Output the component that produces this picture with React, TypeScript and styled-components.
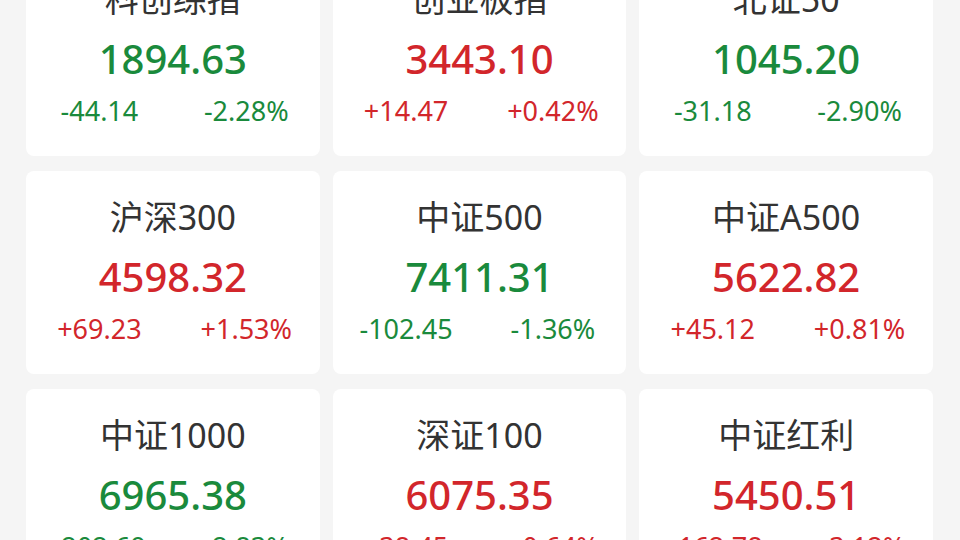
import styled, { createGlobalStyle } from 'styled-components';

type Trend = 'up' | 'down';

interface IndexItem {
  name: string;
  price: string;
  change: string;
  percent: string;
  trend: Trend;
}

const indices: IndexItem[] = [
  { name: '科创综指', price: '1894.63', change: '-44.14', percent: '-2.28%', trend: 'down' },
  { name: '创业板指', price: '3443.10', change: '+14.47', percent: '+0.42%', trend: 'up' },
  { name: '北证50', price: '1045.20', change: '-31.18', percent: '-2.90%', trend: 'down' },
  { name: '沪深300', price: '4598.32', change: '+69.23', percent: '+1.53%', trend: 'up' },
  { name: '中证500', price: '7411.31', change: '-102.45', percent: '-1.36%', trend: 'down' },
  { name: '中证A500', price: '5622.82', change: '+45.12', percent: '+0.81%', trend: 'up' },
  { name: '中证1000', price: '6965.38', change: '-202.69', percent: '-2.83%', trend: 'down' },
  { name: '深证100', price: '6075.35', change: '+38.45', percent: '+0.64%', trend: 'up' },
  { name: '中证红利', price: '5450.51', change: '+162.78', percent: '+3.12%', trend: 'up' },
];

const palette = {
  bg: '#f5f5f5',
  card: '#ffffff',
  title: '#333333',
  up: '#d2262b',
  down: '#1a8a3c',
};

const GlobalStyle = createGlobalStyle`
  html, body {
    margin: 0;
    padding: 0;
    background: ${palette.bg};
    overflow: hidden;
  }
  body {
    font-family: "Noto Sans", "Noto Sans CJK SC", sans-serif;
  }
`;

const Page = styled.div`
  width: 960px;
  height: 540px;
  overflow: hidden;
  background: ${palette.bg};
`;

// the list is scrolled, so the first row starts above the top edge
const Grid = styled.div`
  display: grid;
  grid-template-columns: repeat(3, 1fr);
  gap: 15px 13px;
  padding: 0 27px 0 26px;
  margin-top: -47px;
`;

const Card = styled.div`
  height: 203px;
  box-sizing: border-box;
  padding-top: 26px;
  background: ${palette.card};
  border-radius: 8px;
  display: flex;
  flex-direction: column;
  align-items: center;
`;

const Title = styled.div`
  font-size: 34px;
  line-height: 40px;
  color: ${palette.title};
  white-space: nowrap;
`;

const Price = styled.div<{ $trend: Trend }>`
  margin-top: 16px;
  font-size: 40px;
  line-height: 48px;
  font-weight: 500;
  color: ${(p) => (p.$trend === 'up' ? palette.up : palette.down)};
`;

const ChangeRow = styled.div<{ $trend: Trend }>`
  margin-top: 10px;
  width: 100%;
  display: grid;
  grid-template-columns: 1fr 1fr;
  font-size: 27px;
  line-height: 36px;
  color: ${(p) => (p.$trend === 'up' ? palette.up : palette.down)};
`;

const ChangeCell = styled.span`
  text-align: center;
  white-space: nowrap;
`;

const IndexCard = ({ item }: { item: IndexItem }) => (
  <Card>
    <Title>{item.name}</Title>
    <Price $trend={item.trend}>{item.price}</Price>
    <ChangeRow $trend={item.trend}>
      <ChangeCell>{item.change}</ChangeCell>
      <ChangeCell>{item.percent}</ChangeCell>
    </ChangeRow>
  </Card>
);

const App = () => (
  <Page>
    <GlobalStyle />
    <Grid>
      {indices.map((item) => (
        <IndexCard key={item.name} item={item} />
      ))}
    </Grid>
  </Page>
);

export default App;
